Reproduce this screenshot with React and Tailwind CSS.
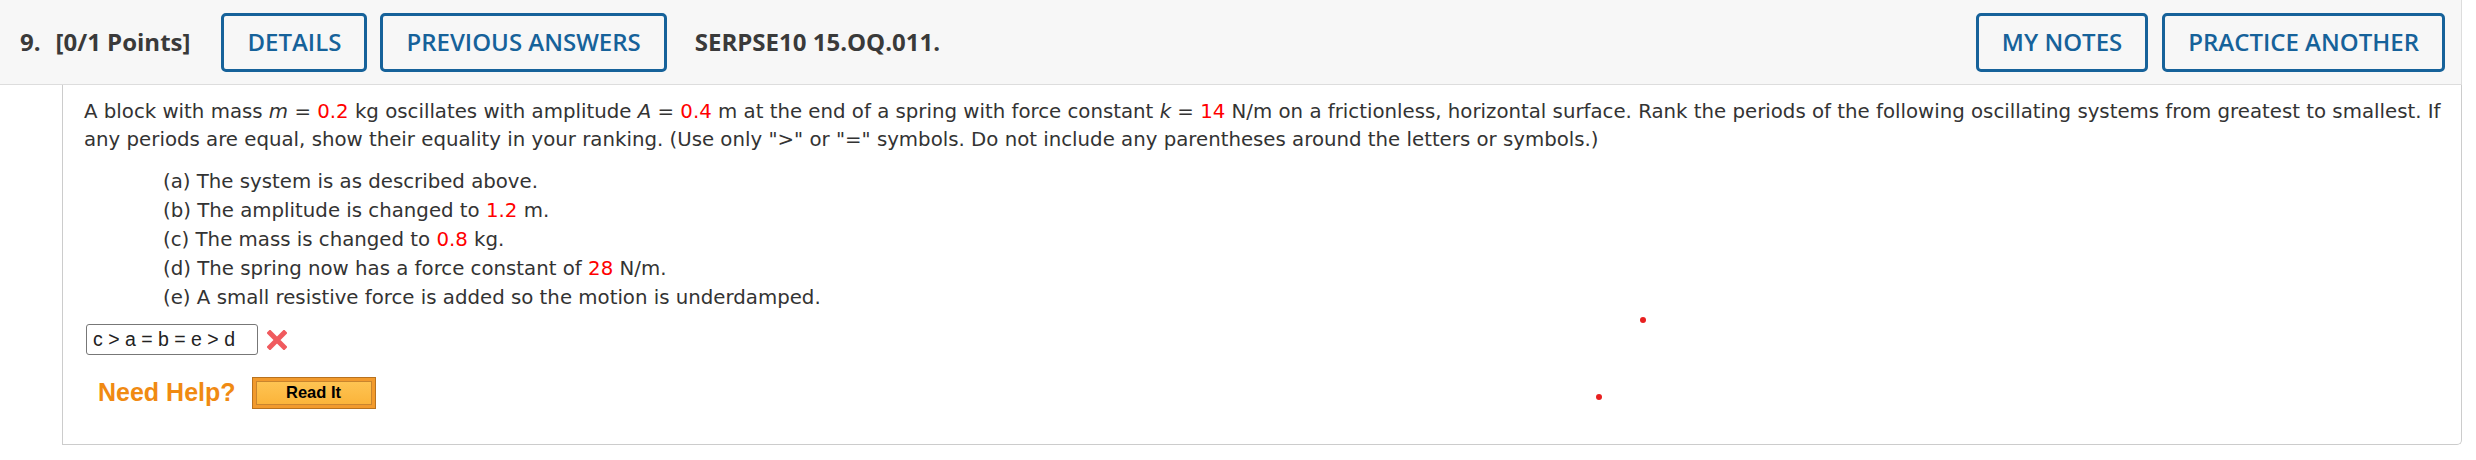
import React from "react";

const Red = ({ children }) => <span className="text-[#ff0000]">{children}</span>;

const HeaderButton = ({ children }) => (
  <button className="h-[59px] px-[23px] border-[3px] border-[#16629a] rounded-[5px] text-[#16629a] text-[24px] font-semibold">
    {children}
  </button>
);

const ReadIt = () => (
  <div className="w-[124px] h-[32px] border border-[#b8721e] bg-[#f29a2c] p-[3px]">
    <div className="h-full border border-[#c9852e] bg-gradient-to-b from-[#fec452] to-[#fbb43a] flex items-center justify-center text-[16.5px] font-bold text-black font-['Liberation_Sans',Arial,sans-serif]">
      Read It
    </div>
  </div>
);

const Parts = [
  <>(a) The system is as described above.</>,
  <>
    (b) The amplitude is changed to <Red>1.2</Red> m.
  </>,
  <>
    (c) The mass is changed to <Red>0.8</Red> kg.
  </>,
  <>
    (d) The spring now has a force constant of <Red>28</Red> N/m.
  </>,
  <>(e) A small resistive force is added so the motion is underdamped.</>,
];

export default function App() {
  return (
    <div className="w-[2476px] h-[460px] bg-white">
      <div className="w-[2462px]">
        {/* header */}
        <div className="h-[85px] bg-[#f7f7f7] border-b border-r border-[#dddddd] flex items-center pl-5 pr-[16px] font-['Open_Sans',sans-serif] text-[#3a3a3a]">
          <span className="text-[24px] font-bold">9.</span>
          <span className="text-[24px] font-bold ml-[15px]">[0/1 Points]</span>
          <div className="ml-[31px] flex gap-[13px]">
            <HeaderButton>DETAILS</HeaderButton>
            <HeaderButton>PREVIOUS ANSWERS</HeaderButton>
          </div>
          <span className="ml-[28px] text-[24px] font-bold">SERPSE10 15.OQ.011.</span>
          <div className="ml-auto flex gap-[14px]">
            <HeaderButton>MY NOTES</HeaderButton>
            <HeaderButton>PRACTICE ANOTHER</HeaderButton>
          </div>
        </div>

        {/* question body */}
        <div className="relative ml-[62px] h-[360px] border-l border-r border-b border-[#cccccc] rounded-br-[5px] pl-[21px] pt-[13px] font-['DejaVu_Sans',Verdana,sans-serif] text-[19.75px] text-[#333333]">
          <p className="w-[2372px] leading-[28px]">
            A block with mass <i>m</i> = <Red>0.2</Red> kg oscillates with amplitude <i>A</i> ={" "}
            <Red>0.4</Red> m at the end of a spring with force constant <i>k</i> = <Red>14</Red> N/m on a
            frictionless, horizontal surface. Rank the periods of the following oscillating systems from
            greatest to smallest. If any periods are equal, show their equality in your ranking. (Use only
            "&gt;" or "=" symbols. Do not include any parentheses around the letters or symbols.)
          </p>

          <div className="ml-[79px] mt-[13px] leading-[29px]">
            {Parts.map((p, i) => (
              <div key={i}>{p}</div>
            ))}
          </div>

          <div className="mt-[12px] flex items-center">
            <div className="ml-[2px] w-[172px] h-[31px] border border-[#777777] rounded-[3px] pl-[6px] flex items-center text-[19.5px] text-[#222222] font-['Liberation_Sans',Arial,sans-serif]">
              c &gt; a = b = e &gt; d
            </div>
            <svg className="ml-[9px]" width="20" height="20" viewBox="0 0 20 20">
              <path d="M3 3 L17 17 M17 3 L3 17" stroke="#f05a5e" strokeWidth="5" strokeLinecap="square" />
            </svg>
          </div>

          <div className="mt-[19px] ml-[14px] flex items-center gap-[16px]">
            <span className="text-[25px] font-bold text-[#f08a12] font-['Liberation_Sans',Arial,sans-serif]">
              Need Help?
            </span>
            <ReadIt />
          </div>

          {/* stray markers */}
          <span className="absolute left-[1577px] top-[232px] w-[6px] h-[6px] rounded-full bg-[#e82020]" />
          <span className="absolute left-[1533px] top-[309px] w-[6px] h-[6px] rounded-full bg-[#e82020]" />
        </div>
      </div>
    </div>
  );
}
